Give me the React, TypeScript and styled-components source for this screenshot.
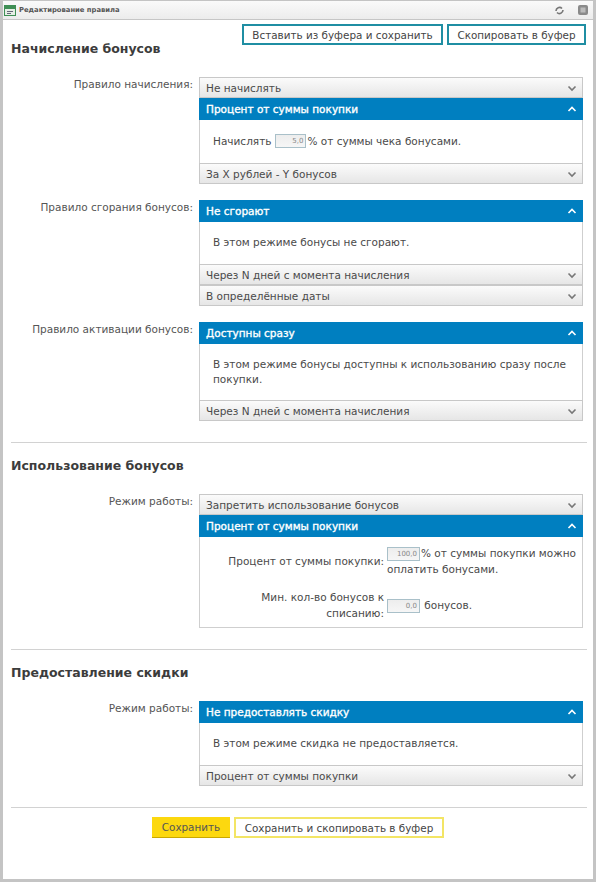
import styled, { createGlobalStyle } from 'styled-components';

const GlobalStyle = createGlobalStyle`
  html, body {
    margin: 0;
    padding: 0;
    background: #fff;
  }
  body {
    font-family: "DejaVu Sans", Verdana, sans-serif;
    font-size: 10.5px;
    color: #4a4a4a;
  }
`;

const Window = styled.div`
  box-sizing: border-box;
  width: 596px;
  height: 882px;
  border: 3px solid #c4c4c4;
  border-top-width: 1px;
  background: #fff;
`;

const TitleBar = styled.div`
  box-sizing: border-box;
  height: 19px;
  display: flex;
  align-items: center;
  gap: 3px;
  padding: 0 5px 0 1px;
  background: linear-gradient(#fafafa, #ececec);
  border-bottom: 1px solid #c6c6c6;
`;

const TitleText = styled.span`
  flex: 1;
  font-size: 6.8px;
  font-weight: 700;
  color: #555;
`;

const TitleIcons = styled.div`
  display: flex;
  align-items: center;
  gap: 14px;
`;

const Content = styled.div`
  padding: 0 6px 0 8px;
`;

const TopRow = styled.div`
  display: flex;
  justify-content: space-between;
  align-items: flex-start;
`;

const SectionTitle = styled.h2<{ $top?: number }>`
  margin: 0;
  padding-top: ${p => p.$top ?? 0}px;
  font-size: 12.5px;
  line-height: 16px;
  font-weight: 700;
  color: #3c3c3c;
`;

const TopButtons = styled.div`
  display: flex;
  gap: 4px;
  padding-top: 4px;
  margin-right: 1px;
`;

const OutlineButton = styled.button<{ $color: string; $width: number }>`
  box-sizing: border-box;
  width: ${p => p.$width}px;
  height: 21px;
  padding: 0;
  border: 2px solid ${p => p.$color};
  background: #fff;
  font: inherit;
  font-size: 10.4px;
  color: #444;
`;

const SaveButton = styled.button`
  box-sizing: border-box;
  width: 78px;
  height: 21px;
  padding: 0;
  border: 0;
  border-bottom: 1px solid #c9a800;
  background: #fcd80f;
  font: inherit;
  font-size: 10.4px;
  color: #555;
`;

const FormRow = styled.div<{ $top: number }>`
  display: grid;
  grid-template-columns: 183px 384px;
  column-gap: 5px;
  margin-top: ${p => p.$top}px;
`;

const RowLabel = styled.div`
  text-align: right;
  line-height: 14px;
  padding-right: 1px;
  color: #555;
`;

const Accordion = styled.div`
  display: flex;
  flex-direction: column;
`;

const Header = styled.div<{ $open?: boolean }>`
  box-sizing: border-box;
  height: ${p => (p.$open ? 22 : 21)}px;
  display: flex;
  align-items: center;
  justify-content: space-between;
  padding: 0 5px 0 6px;
  border: 1px solid ${p => (p.$open ? '#007fc0' : '#c8c8c8')};
  background: ${p => (p.$open ? '#007fc0' : 'linear-gradient(#fbfbfb, #e6e6e6)')};
  color: ${p => (p.$open ? '#fff' : '#4a4a4a')};
  -webkit-text-stroke: ${p => (p.$open ? '0.35px #fff' : '0')};
`;

const Body = styled.div<{ $height: number }>`
  box-sizing: border-box;
  height: ${p => p.$height}px;
  padding: 0 13px 1px;
  display: flex;
  flex-direction: column;
  justify-content: center;
  border: 1px solid #cfcfcf;
  border-top: 0;
  border-bottom: 0;
  line-height: 15px;
  color: #4a4a4a;
`;

const ClosedBody = styled(Body)`
  padding-top: 2px;
  padding-bottom: 0;
  border-bottom: 1px solid #cfcfcf;
`;

const FieldGrid = styled.div`
  display: grid;
  grid-template-columns: 171px 1fr;
  column-gap: 3px;
  row-gap: 12px;
  align-items: center;
  margin-right: -10px;
`;

const FieldLabel = styled.div`
  text-align: right;
  line-height: 16px;
`;

const FieldValue = styled.div`
  line-height: 16px;
`;

const NumberBox = styled.span<{ $width: number; $left?: number }>`
  box-sizing: border-box;
  display: inline-block;
  vertical-align: middle;
  width: ${p => p.$width}px;
  height: 14px;
  margin: -1px 1px 0 ${p => p.$left ?? 0}px;
  border: 1px solid #a9c0c9;
  background: linear-gradient(#ededed, #f6f6f6);
  font-size: 7px;
  line-height: 13px;
  text-align: right;
  padding-right: 2px;
  color: #888;
`;

const Divider = styled.hr<{ $top: number }>`
  border: 0;
  border-top: 1px solid #d2d2d2;
  margin: ${p => p.$top}px 0 0;
`;

const BottomButtons = styled.div`
  display: flex;
  gap: 4px;
  margin: 9px 0 0 141px;
`;

const Chevron = ({ up, color }: { up?: boolean; color: string }) => (
  <svg width="10" height="8" viewBox="0 0 10 8" aria-hidden="true">
    <path d={up ? 'M1.5 6 5 2.5 8.5 6' : 'M1.5 2.5 5 6 8.5 2.5'} fill="none" stroke={color} strokeWidth="1.6" />
  </svg>
);

const Panel = ({ title, open }: { title: string; open?: boolean }) => (
  <Header $open={open}>
    {title}
    <Chevron up={open} color={open ? '#fff' : '#777'} />
  </Header>
);

const App = () => (
  <>
    <GlobalStyle />
    <Window>
      <TitleBar>
        <svg width="12" height="11" viewBox="0 0 12 11" aria-hidden="true">
          <rect x="0.5" y="0.5" width="11" height="10" fill="#e6efe6" stroke="#3f8f55" />
          <rect x="1" y="1" width="10" height="3" fill="#3f8f55" />
          <path d="M3 6.5h6M3 8.5h4" stroke="#667" strokeWidth="1" />
        </svg>
        <TitleText>Редактирование правила</TitleText>
        <TitleIcons>
          <svg width="9" height="9" viewBox="0 0 9 9" aria-hidden="true">
            <path d="M1 5a3.5 3.5 0 0 1 6-2.5M8 4a3.5 3.5 0 0 1-6 2.5" fill="none" stroke="#777" strokeWidth="1.6" />
          </svg>
          <svg width="10" height="10" viewBox="0 0 10 10" aria-hidden="true">
            <rect width="10" height="10" rx="2" fill="#8a8a8a" />
            <rect x="2.5" y="2.5" width="5" height="5" fill="#bbb" />
          </svg>
        </TitleIcons>
      </TitleBar>
      <Content>
        <TopRow>
          <SectionTitle $top={21}>Начисление бонусов</SectionTitle>
          <TopButtons>
            <OutlineButton $color="#1f8ea3" $width={201}>Вставить из буфера и сохранить</OutlineButton>
            <OutlineButton $color="#1f8ea3" $width={139}>Скопировать в буфер</OutlineButton>
          </TopButtons>
        </TopRow>

        <FormRow $top={20}>
          <RowLabel>Правило начисления:</RowLabel>
          <Accordion>
            <Panel title="Не начислять" />
            <Panel title="Процент от суммы покупки" open />
            <Body $height={43}>
              <div>
                Начислять<NumberBox $width={31} $left={4}>5,0</NumberBox>% от суммы чека бонусами.
              </div>
            </Body>
            <Panel title="За X рублей - Y бонусов" />
          </Accordion>
        </FormRow>

        <FormRow $top={16}>
          <RowLabel>Правило сгорания бонусов:</RowLabel>
          <Accordion>
            <Panel title="Не сгорают" open />
            <Body $height={42}>В этом режиме бонусы не сгорают.</Body>
            <Panel title="Через N дней с момента начисления" />
            <Panel title="В определённые даты" />
          </Accordion>
        </FormRow>

        <FormRow $top={16}>
          <RowLabel>Правило активации бонусов:</RowLabel>
          <Accordion>
            <Panel title="Доступны сразу" open />
            <Body $height={56}>В этом режиме бонусы доступны к использованию сразу после покупки.</Body>
            <Panel title="Через N дней с момента начисления" />
          </Accordion>
        </FormRow>

        <Divider $top={21} />
        <SectionTitle $top={15}>Использование бонусов</SectionTitle>

        <FormRow $top={20}>
          <RowLabel>Режим работы:</RowLabel>
          <Accordion>
            <Panel title="Запретить использование бонусов" />
            <Panel title="Процент от суммы покупки" open />
            <ClosedBody $height={91}>
              <FieldGrid>
                <FieldLabel>Процент от суммы покупки:</FieldLabel>
                <FieldValue>
                  <NumberBox $width={33}>100,0</NumberBox>% от суммы покупки можно оплатить бонусами.
                </FieldValue>
                <FieldLabel>Мин. кол-во бонусов к списанию:</FieldLabel>
                <FieldValue>
                  <NumberBox $width={33}>0,0</NumberBox> бонусов.
                </FieldValue>
              </FieldGrid>
            </ClosedBody>
          </Accordion>
        </FormRow>

        <Divider $top={21} />
        <SectionTitle $top={15}>Предоставление скидки</SectionTitle>

        <FormRow $top={20}>
          <RowLabel>Режим работы:</RowLabel>
          <Accordion>
            <Panel title="Не предоставлять скидку" open />
            <Body $height={42}>В этом режиме скидка не предоставляется.</Body>
            <Panel title="Процент от суммы покупки" />
          </Accordion>
        </FormRow>

        <Divider $top={21} />
        <BottomButtons>
          <SaveButton>Сохранить</SaveButton>
          <OutlineButton $color="#f3e565" $width={210}>Сохранить и скопировать в буфер</OutlineButton>
        </BottomButtons>
      </Content>
    </Window>
  </>
);

export default App;
